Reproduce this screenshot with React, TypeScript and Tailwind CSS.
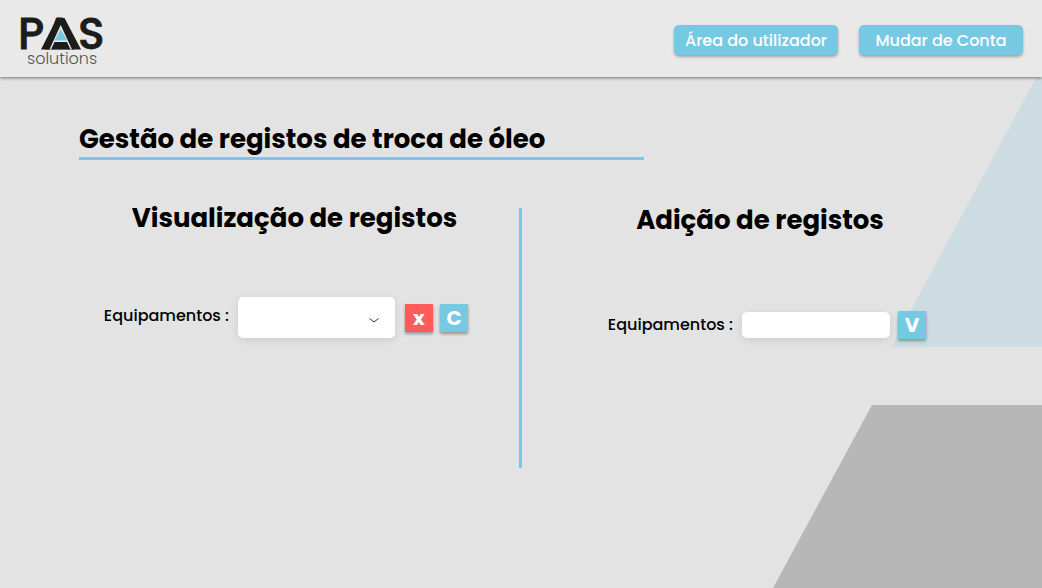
import React from "react";

function Logo() {
  return (
    <svg className="block h-[77px] w-[120px]" viewBox="0 0 120 77" role="img" aria-label="PAS solutions" fontFamily="Poppins, sans-serif">
      <g fill="#1c1d1b" stroke="#1c1d1b" strokeWidth="0.8" fontSize="44" fontWeight="500">
        <text x="18" y="49">P</text>
        <text x="44" y="49">A</text>
        <text x="78" y="49">S</text>
      </g>
      <path d="M57 18h7.500L81 49.500H41z" fill="#1c1d1b" />
      <path d="M60.700 25L72 49.500H49.500z" fill="#e9e9e9" />
      <path d="M60.700 29l6.500 11.500H54.500z" fill="#76c9e3" />
      <path d="M54.500 42h12.500l3.500 7.500H51z" fill="#1c1d1b" />
      <text x="27" y="64" fill="#555" fontSize="16" fontWeight="300">solutions</text>
    </svg>
  );
}

function Backdrop() {
  return (
    <div className="absolute inset-0 overflow-hidden" aria-hidden="true">
      <svg className="absolute top-[78px] right-0 h-[269px] w-[151px]" viewBox="0 0 151 269">
        <path d="M145 0h6v269H0z" fill="#ccdce2" />
      </svg>
      <svg className="absolute right-0 bottom-0 h-[183px] w-[269px]" viewBox="0 0 269 183">
        <path d="M99 0h170v183H0z" fill="#b7b7b7" />
      </svg>
    </div>
  );
}

const headerButton =
  "h-[30px] w-[164px] rounded-[5px] bg-[#76c9e3] pt-0.5 text-base leading-7 font-medium text-white shadow-[0_2px_3px_rgba(0,0,0,0.3)]";
const blueButton =
  "size-7 bg-[#76c9e3] text-xl leading-6 font-bold text-white shadow-[0_2px_3px_rgba(0,0,0,0.35)]";
const redButton =
  "size-7 bg-[#ff5a5c] text-xl leading-6 font-bold text-white shadow-[0_2px_3px_rgba(0,0,0,0.35)]";

export default function App() {
  return (
    <div className="relative min-h-screen bg-[#e3e3e3] font-[Poppins,Inter,sans-serif] text-black">
      <Backdrop />
      <header className="relative flex h-[77px] items-center justify-between bg-[#e9e9e9] pr-[19px] shadow-[0_1px_3px_rgba(0,0,0,0.5)]">
        <a href="#inicio">
          <Logo />
        </a>
        <nav className="flex gap-[21px] pt-0.5">
          <button type="button" className={headerButton}>Área do utilizador</button>
          <button type="button" className={headerButton}>Mudar de Conta</button>
        </nav>
      </header>
      <main className="relative pt-11">
        <h1 className="ml-[79px] w-[565px] border-b-3 border-[#76c9e3] text-[26px] leading-9 font-bold">
          Gestão de registos de troca de óleo
        </h1>
        <div className="mt-12 grid grid-cols-2">
          <section className="-mr-px h-[260px] border-r-3 border-[#76c9e3]">
            <h2 className="pl-[70px] text-center text-[26px] leading-5 font-bold">Visualização de registos</h2>
            <div className="mt-[69px] flex items-center justify-end pr-[51px]">
              <label htmlFor="view" className="pb-1 text-base leading-6 font-medium">Equipamentos :</label>
              <div className="relative ml-[9px]">
                <select id="view" className="block h-[41px] w-[157px] appearance-none rounded-[5px] bg-white px-3 shadow-[0_2px_8px_rgba(0,0,0,0.1)]">
                  <option></option>
                </select>
                <svg className="pointer-events-none absolute right-[15px] bottom-3.5 h-2 w-3" viewBox="0 0 12 8" fill="none" stroke="#333">
                  <path d="M1.500 2.500L6 6L10.500 2.500" />
                </svg>
              </div>
              <button type="button" className={`ml-[10px] ${redButton}`}>x</button>
              <button type="button" className={`ml-[7px] ${blueButton}`}>C</button>
            </div>
          </section>
          <section>
            <h2 className="pr-[43px] text-center text-[26px] leading-6 font-bold">Adição de registos</h2>
            <div className="mt-[79px] flex items-center justify-end pr-[116px]">
              <label htmlFor="add" className="text-base leading-6 font-medium">Equipamentos :</label>
              <input id="add" type="text" className="ml-[9px] h-[26px] w-[148px] rounded-[5px] bg-white px-2 shadow-[0_2px_8px_rgba(0,0,0,0.1)]" />
              <button type="button" className={`ml-2 ${blueButton}`}>V</button>
            </div>
          </section>
        </div>
      </main>
    </div>
  );
}
